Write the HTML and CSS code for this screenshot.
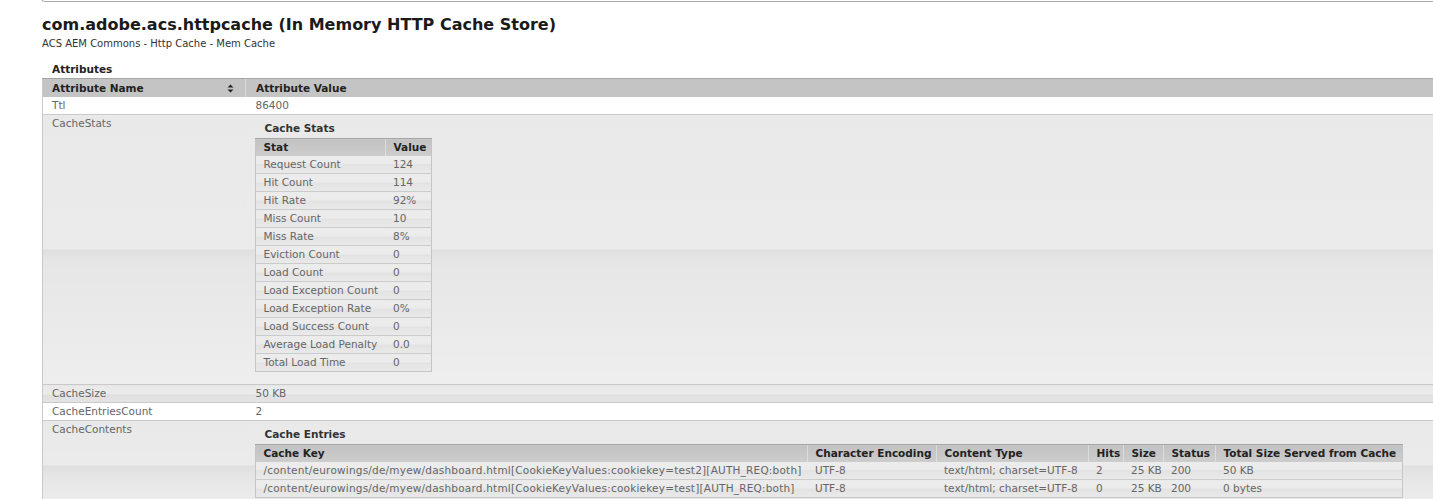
FILE: index.html
```html
<!DOCTYPE html>
<html>
<head>
<meta charset="utf-8">
<title>com.adobe.acs.httpcache</title>
<link rel="stylesheet" href="styles.css">
</head>
<body>
<div class="topbox"></div>
<div class="page">
  <h1 class="title">com.adobe.acs.httpcache (In Memory HTTP Cache Store)</h1>
  <div class="subtitle">ACS AEM Commons - Http Cache - Mem Cache</div>
  <div class="section-title">Attributes</div>
  <table class="attrs">
    <colgroup><col class="c-name"><col></colgroup>
    <thead>
      <tr class="hdr">
        <th class="sortable">Attribute Name<svg class="sort-icon" width="7" height="9" viewBox="0 0 7 9"><path d="M0.5 3.5 L3.5 0.5 L6.5 3.5 Z M0.5 5.5 L3.5 8.5 L6.5 5.5 Z" fill="#222"/></svg></th>
        <th>Attribute Value</th>
      </tr>
    </thead>
    <tbody>
      <tr class="white"><td>Ttl</td><td>86400</td></tr>
      <tr class="glass">
        <td>CacheStats</td>
        <td class="nested-cell">
          <div class="nested-title">Cache Stats</div>
          <table class="nested stats">
            <colgroup><col class="s1"><col class="s2"></colgroup>
            <thead><tr class="nhdr"><th>Stat</th><th>Value</th></tr></thead>
            <tbody>
              <tr><td>Request Count</td><td>124</td></tr>
              <tr><td>Hit Count</td><td>114</td></tr>
              <tr><td>Hit Rate</td><td>92%</td></tr>
              <tr><td>Miss Count</td><td>10</td></tr>
              <tr><td>Miss Rate</td><td>8%</td></tr>
              <tr><td>Eviction Count</td><td>0</td></tr>
              <tr><td>Load Count</td><td>0</td></tr>
              <tr><td>Load Exception Count</td><td>0</td></tr>
              <tr><td>Load Exception Rate</td><td>0%</td></tr>
              <tr><td>Load Success Count</td><td>0</td></tr>
              <tr><td>Average Load Penalty</td><td>0.0</td></tr>
              <tr><td>Total Load Time</td><td>0</td></tr>
            </tbody>
          </table>
        </td>
      </tr>
      <tr class="glass"><td>CacheSize</td><td>50 KB</td></tr>
      <tr class="white"><td>CacheEntriesCount</td><td>2</td></tr>
      <tr class="glass">
        <td>CacheContents</td>
        <td class="nested-cell">
          <div class="nested-title">Cache Entries</div>
          <table class="nested entries">
            <colgroup><col class="e1"><col class="e2"><col class="e3"><col class="e4"><col class="e5"><col class="e6"><col class="e7"></colgroup>
            <thead><tr class="nhdr"><th>Cache Key</th><th>Character Encoding</th><th>Content Type</th><th class="num">Hits</th><th>Size</th><th>Status</th><th>Total Size Served from Cache</th></tr></thead>
            <tbody>
              <tr><td class="key">/content/eurowings/de/myew/dashboard.html[CookieKeyValues:cookiekey=test2][AUTH_REQ:both]</td><td>UTF-8</td><td>text/html; charset=UTF-8</td><td>2</td><td>25 KB</td><td>200</td><td>50 KB</td></tr>
              <tr><td class="key">/content/eurowings/de/myew/dashboard.html[CookieKeyValues:cookiekey=test][AUTH_REQ:both]</td><td>UTF-8</td><td>text/html; charset=UTF-8</td><td>0</td><td>25 KB</td><td>200</td><td>0 bytes</td></tr>
            </tbody>
          </table>
        </td>
      </tr>
    </tbody>
  </table>
</div>
</body>
</html>
```
FILE: styles.css
```css
html, body {
  margin: 0;
  padding: 0;
  background: #ffffff;
}
body {
  font-family: "DejaVu Sans", Verdana, sans-serif;
  color: #222222;
}
.topbox {
  margin-left: 41px;
  margin-top: -3px;
  height: 4px;
  border-left: 1px solid #a9a9a9;
  border-bottom: 1px solid #a9a9a9;
  border-bottom-left-radius: 4px;
}
.page {
  padding-left: 42px;
}
.title {
  margin: 12px 0 0 0;
  font-size: 16px;
  line-height: 22px;
  font-weight: bold;
  color: #1a1a1a;
}
.subtitle {
  margin-top: 2px;
  font-size: 10px;
  line-height: 12px;
  color: #333333;
}
.section-title {
  margin-top: 12px;
  padding-left: 10px;
  font-size: 10.5px;
  font-weight: bold;
  line-height: 14px;
  color: #222222;
}
table {
  border-collapse: collapse;
  border-spacing: 0;
}
.attrs {
  width: 100%;
  margin-top: 2px;
  table-layout: fixed;
  font-size: 10.5px;
  border-left: 1px solid #c9c9c9;
}
.attrs .c-name {
  width: 203px;
}
.attrs th, .attrs td {
  text-align: left;
  vertical-align: top;
  padding: 0 4px 0 9px;
  line-height: 17px;
  white-space: nowrap;
}
.hdr th {
  background: #c4c4c4;
  border-top: 1px solid #a4a4a4;
  color: #222222;
  font-weight: bold;
  height: 18px;
  line-height: 18px;
}
.hdr th + th {
  border-left: 1px solid #d9d9d9;
  padding-left: 10px;
}
.sortable {
  position: relative;
}
.sort-icon {
  position: absolute;
  right: 11px;
  top: 5px;
}
.attrs > tbody > tr > td {
  color: #666666;
  border-top: 1px solid #c9c9c9;
}
.attrs > tbody > tr > td + td {
  padding-left: 10px;
}
.attrs > tbody > tr.white > td {
  background: #ffffff;
}
.attrs > tbody > tr:first-child > td {
  border-top: none;
}
.attrs > tbody > tr.glass > td {
  background: linear-gradient(to bottom, #e9e9e9 0, #ebebeb 50%, #dfdfdf 50%, #e6e6e6 calc(50% + 12px), #eeeeee 100%);
}
.nested-cell {
  padding-bottom: 12px !important;
}
.nested-title {
  font-weight: bold;
  color: #333333;
  padding-left: 9px;
  margin-top: 4px;
  line-height: 19px;
}
.nested {
  table-layout: fixed;
  border: 1px solid #c5c5c5;
  margin-left: -1px;
}
.stats {
  width: 176px;
}
.stats .s1 { width: 130px; }
.stats .s2 { width: 46px; }
.entries {
  width: 1147px;
}
.entries .e1 { width: 552px; }
.entries .e2 { width: 129px; }
.entries .e3 { width: 152px; }
.entries .e4 { width: 35px; }
.entries .e5 { width: 40px; }
.entries .e6 { width: 52px; }
.entries .e7 { width: 187px; }
.nested th, .nested td {
  padding: 0 3px 0 8px !important;
  line-height: 17px;
  text-align: left;
  white-space: nowrap;
  overflow: hidden;
}
.nested td.key {
  letter-spacing: 0.2px;
}
.nhdr th {
  background: linear-gradient(to bottom, #c2c2c2, #cdcdcd);
  border-top: 1px solid #a5a5a5;
  font-weight: bold;
  color: #222222;
}
.nhdr th + th {
  border-left: 1px solid #dcdcdc;
}
.nested tbody td {
  color: #666666;
  border-top: 1px solid #cbcbcb;
  background: linear-gradient(to bottom, #ececec 0, #ebebeb 45%, #e2e2e2 45%, #e6e6e6 75%, #eaeaea 100%);
}
.nested tbody tr:first-child td {
  border-top: none;
}
.entries th.num {
  text-align: right;
}
```
